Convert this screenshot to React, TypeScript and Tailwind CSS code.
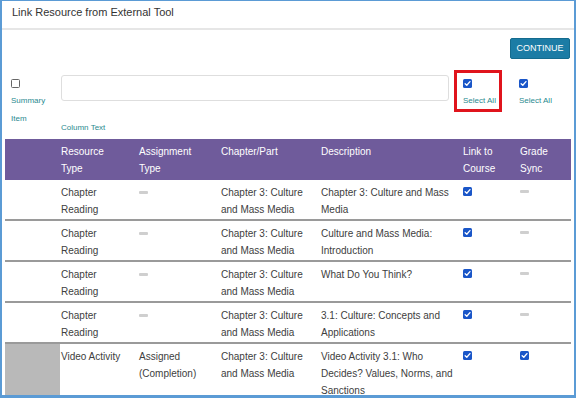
const font = { fontFamily: '"Liberation Sans", Arial, sans-serif' }

type Row = {
  type: string[]
  assign: string[] | null
  chapter: string[]
  desc: string[]
  link: boolean
  grade: boolean
  shaded?: boolean
}

const rows: Row[] = [
  { type: ['Chapter', 'Reading'], assign: null, chapter: ['Chapter 3: Culture', 'and Mass Media'], desc: ['Chapter 3: Culture and Mass', 'Media'], link: true, grade: false },
  { type: ['Chapter', 'Reading'], assign: null, chapter: ['Chapter 3: Culture', 'and Mass Media'], desc: ['Culture and Mass Media:', 'Introduction'], link: true, grade: false },
  { type: ['Chapter', 'Reading'], assign: null, chapter: ['Chapter 3: Culture', 'and Mass Media'], desc: ['What Do You Think?'], link: true, grade: false },
  { type: ['Chapter', 'Reading'], assign: null, chapter: ['Chapter 3: Culture', 'and Mass Media'], desc: ['3.1: Culture: Concepts and', 'Applications'], link: true, grade: false },
  { type: ['Video Activity'], assign: ['Assigned', '(Completion)'], chapter: ['Chapter 3: Culture', 'and Mass Media'], desc: ['Video Activity 3.1: Who', 'Decides? Values, Norms, and', 'Sanctions'], link: true, grade: true, shaded: true },
]

const Checked = () => (
  <span className="flex h-[9px] w-[9px] items-center justify-center rounded-[1.5px] bg-[#1a56c8]">
    <svg width="7" height="7" viewBox="0 0 8 8" fill="none">
      <path d="M1.3 4.2 L3.2 6 L6.8 1.8" stroke="white" strokeWidth="1.5" strokeLinecap="round" strokeLinejoin="round" />
    </svg>
  </span>
)

const Dash = () => <span className="mt-[7px] block h-[3px] w-[9px] rounded-[1px] bg-[#cfcfcf]" />

const Lines = ({ lines }: { lines: string[] }) => (
  <div>
    {lines.map((l) => (
      <div key={l}>{l}</div>
    ))}
  </div>
)

const gridCols = 'grid grid-cols-[56px_78px_82px_100px_142px_57px_1fr]'

export default function App() {
  return (
    <div
      style={font}
      className="h-[398px] w-[576px] overflow-hidden border-x-2 border-t border-b-[3px] border-[#5b9bd5] bg-white"
    >
      <div className="h-[29px] border-b-2 border-[#e6e6e6] pl-[10px] pt-[3px] text-[11px] leading-[16px] text-[#333]">
        Link Resource from External Tool
      </div>

      <div className="flex justify-end pr-[4px] pt-[8px]">
        <button className="h-[21px] w-[60px] rounded-[2px] border border-[#146b8e] bg-[#1c7ca5] text-[9px] font-medium text-white">
          CONTINUE
        </button>
      </div>

      <div className="mt-[11px] flex h-[69px] text-[8px] text-[#2a8a8f]">
        <div className="w-[59px] pl-[9px] pt-[9px]">
          <span className="block h-[9px] w-[9px] rounded-[1.5px] border border-[#666] bg-white" />
          <div className="mt-[4px] leading-[18px]">
            <div>Summary</div>
            <div>Item</div>
          </div>
        </div>
        <div className="w-[388px] pt-[5px]">
          <div className="h-[26px] rounded-[3px] border border-[#dedede]" />
          <div className="mt-[21px] leading-[12px]">Column Text</div>
        </div>
        <div className="ml-[5px] h-[42px] w-[48px] border-[3px] border-[#e0141c] pl-[6px] pt-[6px]">
          <Checked />
          <div className="mt-[7px] leading-[12px]">Select All</div>
        </div>
        <div className="ml-[17px] pt-[9px]">
          <Checked />
          <div className="mt-[7px] leading-[12px]">Select All</div>
        </div>
      </div>

      <div className="mx-[3px] text-[10px] leading-[17px]">
        <div className={`${gridCols} h-[41px] bg-[#6f5b9b] pt-[4px] text-white`}>
          <div />
          <Lines lines={['Resource', 'Type']} />
          <Lines lines={['Assignment', 'Type']} />
          <Lines lines={['Chapter/Part']} />
          <Lines lines={['Description']} />
          <Lines lines={['Link to', 'Course']} />
          <Lines lines={['Grade', 'Sync']} />
        </div>
        {rows.map((r, i) => (
          <div
            key={i}
            className={`${gridCols} text-[#404040] ${i < rows.length - 1 ? 'h-[41px] border-b-2 border-[#9a9a9a]' : 'h-[60px]'}`}
          >
            <div className={r.shaded ? 'mr-[1px] bg-[#b9b9b9]' : ''} />
            <div className="pt-[4px]">
              <Lines lines={r.type} />
            </div>
            <div className="pt-[4px]">{r.assign ? <Lines lines={r.assign} /> : <Dash />}</div>
            <div className="pt-[4px]">
              <Lines lines={r.chapter} />
            </div>
            <div className="pt-[4px]">
              <Lines lines={r.desc} />
            </div>
            <div className="pt-[7px]">
              <Checked />
            </div>
            <div className="pt-[3px]">{r.grade ? <div className="pt-[4px]"><Checked /></div> : <Dash />}</div>
          </div>
        ))}
      </div>
    </div>
  )
}
